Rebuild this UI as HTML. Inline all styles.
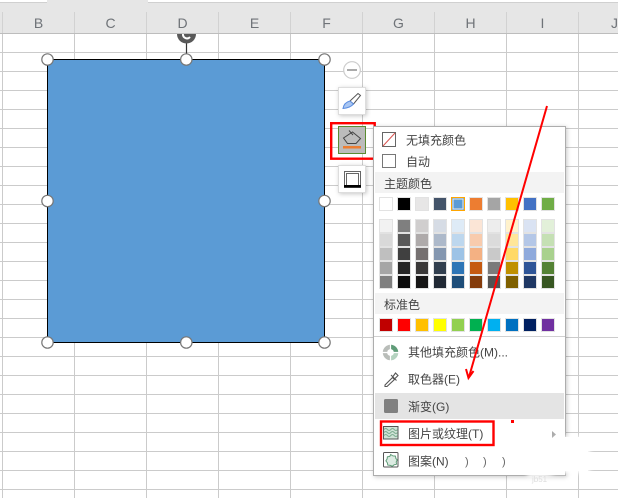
<!DOCTYPE html>
<html><head><meta charset="utf-8"><style>
html,body{margin:0;padding:0;background:#fff;overflow:hidden}
svg{display:block}
text{font-family:"Liberation Sans","Noto Sans CJK SC",sans-serif;font-size:12px;fill:#444}
.h{font-size:14px;fill:#6f7378;text-anchor:middle}
.s rect{width:13px;height:13px;stroke:#e2e2e2;stroke-width:1px}
.g{stroke:#cbcbcb;stroke-width:1;fill:none}
.hd circle{fill:#fff;stroke:#777;stroke-width:1.2}
</style></head><body>
<svg width="618" height="498" viewBox="0 0 618 498" xmlns="http://www.w3.org/2000/svg">
<defs>
<filter id="sh" x="-20%" y="-20%" width="140%" height="140%"><feDropShadow dx="1" dy="1" stdDeviation="2" flood-color="#000" flood-opacity=".22"/></filter>
<filter id="bl" x="-20%" y="-20%" width="140%" height="140%"><feGaussianBlur stdDeviation="2"/></filter>
</defs>
<rect width="618" height="498" fill="#fff"/>
<!-- grid -->
<path class="g" d="M0 52.5H618M0 71.5H618M0 90.5H618M0 109.5H618M0 128.5H618M0 147.5H618M0 166.5H618M0 185.5H618M0 204.5H618M0 223.5H618M0 242.5H618M0 261.5H618M0 280.5H618M0 299.5H618M0 318.5H618M0 337.5H618M0 356.5H618M0 375.5H618M0 394.5H618M0 413.5H618M0 432.5H618M0 451.5H618M0 470.5H618M0 489.5H618"/>
<path class="g" d="M2.5 33V498M74.5 33V498M146.5 33V498M218.5 33V498M290.5 33V498M362.5 33V498M434.5 33V498M506.5 33V498M578.5 33V498"/>
<!-- header -->
<rect y="0" width="618" height="33" fill="#e6e6e6"/>
<rect width="47" height="2" fill="#fff"/><rect x="148" width="470" height="2" fill="#fff"/>
<path d="M0 2.5H47M148 2.5H618" stroke="#d0d0d0"/>
<path d="M0 33.5H618" stroke="#bdbdbd"/>
<path d="M2.5 12V33M74.5 12V33M146.5 12V33M218.5 12V33M290.5 12V33M362.5 12V33M434.5 12V33M506.5 12V33M578.5 12V33" stroke="#d2d2d2"/>
<text class="h" x="38.500" y="28">B</text><text class="h" x="110.500" y="28">C</text><text class="h" x="182.500" y="28">D</text><text class="h" x="254.500" y="28">E</text><text class="h" x="326.500" y="28">F</text><text class="h" x="398.500" y="28">G</text><text class="h" x="470.500" y="28">H</text><text class="h" x="542.500" y="28">I</text><text class="h" x="614.500" y="28">J</text>
<!-- shape -->
<rect x="47.500" y="59.500" width="277" height="283" fill="#5b9bd5" stroke="#000"/>
<path d="M186.500 42V54" stroke="#333" stroke-width="1.2"/>
<path d="M177 34A9.500 9.500 0 0 0 196 34Z" fill="#595959"/>
<path d="M183 34a4 4 0 0 0 7 3" stroke="#fff" stroke-width="2" fill="none"/>
<g class="hd">
<circle cx="47.500" cy="59.500" r="5.700"/><circle cx="186.300" cy="59.500" r="5.700"/><circle cx="324.500" cy="59.500" r="5.700"/>
<circle cx="47.500" cy="201" r="5.700"/><circle cx="324.500" cy="201" r="5.700"/>
<circle cx="47.500" cy="342.500" r="5.700"/><circle cx="186.300" cy="342.500" r="5.700"/><circle cx="324.500" cy="342.500" r="5.700"/>
</g>
<!-- side toolbar -->
<circle cx="352" cy="70" r="8.300" fill="#fff" stroke="#ccc" stroke-width="1.200"/>
<path d="M347 70H357" stroke="#aaa" stroke-width="2"/>
<rect x="338.500" y="87.500" width="27" height="27" fill="#fff" stroke="#ddd" filter="url(#sh)"/>
<path d="M350 101L358 93.500 360.500 95.500 353.500 104Z" fill="#fff" stroke="#555"/>
<path d="M343 108.500Q344 102.500 350 101L353.500 104Q350 108 343 108.500Z" fill="#a9c6f2" stroke="#5b8de0"/>
<rect x="338.500" y="126.500" width="27" height="27" fill="#bcbcbc" stroke="#5a8c32"/>
<path d="M343.500 138L352.500 132 360.500 138.500 356 143.500H347.500L343.500 138ZM349 130.500L353 135" fill="none" stroke="#444" stroke-width="1"/>
<rect x="343" y="146" width="18" height="2.500" fill="#ed7d31"/>
<rect x="338.500" y="165.500" width="27" height="27" fill="#fff" stroke="#ddd" filter="url(#sh)"/>
<path d="M344.500 185V171.500H360.500V185M346.500 185V173.500H358.500V185" fill="none" stroke="#666"/>
<rect x="344" y="185" width="17" height="2.800" fill="#000"/>
<rect x="331.200" y="123.200" width="43.500" height="35.500" fill="none" stroke="#f00" stroke-width="2.400"/>
<!-- menu -->
<rect x="373.500" y="126.500" width="192" height="349" fill="#fff" stroke="#adadad" filter="url(#sh)"/>
<rect x="382.500" y="132.500" width="13" height="14" fill="#fff" stroke="#666"/>
<path d="M383 146L395 133" stroke="#d9534f"/>
<text x="406" y="144.500">无填充颜色</text>
<rect x="382.500" y="154.500" width="13" height="13" fill="#fff" stroke="#777"/>
<text x="406" y="166">自动</text>
<rect x="375" y="172" width="189" height="21" fill="#f3f3f3"/>
<text x="384" y="188">主题颜色</text>
<g class="s">
<rect x="379.500" y="197.500" fill="#ffffff"/><rect x="397.500" y="197.500" fill="#000000"/><rect x="415.500" y="197.500" fill="#e7e6e6"/><rect x="433.500" y="197.500" fill="#44546a"/><rect x="469.500" y="197.500" fill="#ed7d31"/><rect x="487.500" y="197.500" fill="#a5a5a5"/><rect x="505.500" y="197.500" fill="#ffc000"/><rect x="523.500" y="197.500" fill="#4472c4"/><rect x="541.500" y="197.500" fill="#70ad47"/>
<rect x="379.500" y="219.500" fill="#f2f2f2"/><rect x="379.500" y="233.500" fill="#d9d9d9"/><rect x="379.500" y="247.500" fill="#bfbfbf"/><rect x="379.500" y="261.500" fill="#a6a6a6"/><rect x="379.500" y="275.500" fill="#808080"/>
<rect x="397.500" y="219.500" fill="#7f7f7f"/><rect x="397.500" y="233.500" fill="#595959"/><rect x="397.500" y="247.500" fill="#404040"/><rect x="397.500" y="261.500" fill="#262626"/><rect x="397.500" y="275.500" fill="#0d0d0d"/>
<rect x="415.500" y="219.500" fill="#d0cece"/><rect x="415.500" y="233.500" fill="#aeaaaa"/><rect x="415.500" y="247.500" fill="#757070"/><rect x="415.500" y="261.500" fill="#3a3838"/><rect x="415.500" y="275.500" fill="#171616"/>
<rect x="433.500" y="219.500" fill="#d6dce5"/><rect x="433.500" y="233.500" fill="#adb9ca"/><rect x="433.500" y="247.500" fill="#8497b0"/><rect x="433.500" y="261.500" fill="#323f4f"/><rect x="433.500" y="275.500" fill="#222a35"/>
<rect x="451.500" y="219.500" fill="#deebf7"/><rect x="451.500" y="233.500" fill="#bdd7ee"/><rect x="451.500" y="247.500" fill="#9dc3e6"/><rect x="451.500" y="261.500" fill="#2e75b6"/><rect x="451.500" y="275.500" fill="#1f4e79"/>
<rect x="469.500" y="219.500" fill="#fbe5d6"/><rect x="469.500" y="233.500" fill="#f8cbad"/><rect x="469.500" y="247.500" fill="#f4b183"/><rect x="469.500" y="261.500" fill="#c55a11"/><rect x="469.500" y="275.500" fill="#843c0c"/>
<rect x="487.500" y="219.500" fill="#ededed"/><rect x="487.500" y="233.500" fill="#dbdbdb"/><rect x="487.500" y="247.500" fill="#c9c9c9"/><rect x="487.500" y="261.500" fill="#7b7b7b"/><rect x="487.500" y="275.500" fill="#525252"/>
<rect x="505.500" y="219.500" fill="#fff2cc"/><rect x="505.500" y="233.500" fill="#ffe699"/><rect x="505.500" y="247.500" fill="#ffd966"/><rect x="505.500" y="261.500" fill="#bf9000"/><rect x="505.500" y="275.500" fill="#7f6000"/>
<rect x="523.500" y="219.500" fill="#dae3f3"/><rect x="523.500" y="233.500" fill="#b4c7e7"/><rect x="523.500" y="247.500" fill="#8faadc"/><rect x="523.500" y="261.500" fill="#2f5597"/><rect x="523.500" y="275.500" fill="#203864"/>
<rect x="541.500" y="219.500" fill="#e2f0d9"/><rect x="541.500" y="233.500" fill="#c5e0b4"/><rect x="541.500" y="247.500" fill="#a9d18e"/><rect x="541.500" y="261.500" fill="#548235"/><rect x="541.500" y="275.500" fill="#385723"/>
<rect x="379.500" y="318.500" fill="#c00000"/><rect x="397.500" y="318.500" fill="#ff0000"/><rect x="415.500" y="318.500" fill="#ffc000"/><rect x="433.500" y="318.500" fill="#ffff00"/><rect x="451.500" y="318.500" fill="#92d050"/><rect x="469.500" y="318.500" fill="#00b050"/><rect x="487.500" y="318.500" fill="#00b0f0"/><rect x="505.500" y="318.500" fill="#0070c0"/><rect x="523.500" y="318.500" fill="#002060"/><rect x="541.500" y="318.500" fill="#7030a0"/>
</g>
<rect x="451.500" y="197.500" width="13" height="13" fill="#5b9bd5" stroke="#ffa500" stroke-width="1"/>
<rect x="453" y="199" width="10" height="10" fill="#5b9bd5" stroke="#e8e8e8"/>
<rect x="375" y="293" width="189" height="21" fill="#f3f3f3"/>
<text x="384" y="309">标准色</text>
<path d="M374 336.500H565" stroke="#d0d0d0"/>
<!-- other colors -->
<circle cx="390.500" cy="352.500" r="7.700" fill="#b9bdb9"/>
<path d="M390.500 352.500V344.800A7.700 7.700 0 0 1 398.200 352.500Z" fill="#5f9c78"/>
<path d="M390.500 352.500H398.200A7.700 7.700 0 0 1 390.500 360.200Z" fill="#b5d3c0"/>
<path d="M382 352.500H399M390.500 344V361" stroke="#fff" stroke-width="1.200"/>
<circle cx="390.500" cy="352.500" r="3.400" fill="#fff"/>
<text x="408" y="356.500">其他填充颜色(M)...</text>
<!-- eyedropper -->
<path d="M385 385L392.500 377.500 394.500 379.500 387 386.500 385 386.500ZM391 375L396.500 380.500M393 376.500L395.500 373 398 375.500 395 378.500" fill="#fff" stroke="#555" stroke-width="1.100"/>
<text x="408" y="383.500">取色器(E)</text>
<rect x="375" y="393" width="189" height="26" fill="#e4e4e4"/>
<rect x="384" y="399" width="14" height="14" rx="1.500" fill="#808080"/>
<text x="408" y="411">渐变(G)</text>
<!-- picture -->
<rect x="383.500" y="426.500" width="14.500" height="12.500" fill="#cfe3d6" stroke="#555"/>
<path d="M384 429.500q1.700-2 3.400 0t3.400 0 3.400 0 3.400 0M384 432.500q1.700-2 3.400 0t3.400 0 3.400 0 3.400 0M384 435.500q1.700-2 3.400 0t3.400 0 3.400 0 3.400 0" fill="none" stroke="#7fae92"/>
<text x="408" y="438">图片或纹理(T)</text>
<rect x="381" y="421.500" width="112.500" height="23.500" fill="none" stroke="#f00" stroke-width="2.400"/>
<path d="M552 431l4 3.500-4 3.500z" fill="#aaa"/>
<!-- pattern -->
<rect x="383.500" y="452.500" width="14.500" height="14.500" rx="1" fill="#fff" stroke="#555"/>
<path d="M390.700 454.500l2.200 1.400 2.500.2.500 2.500 1.300 1.200-1 2.300.400 2-2.500.700-1.700 1.500-2-.900-2.600-.300-.500-2.400-1.400-1.800 1.200-2 .300-2.100 2.400-.400z" fill="#dcebe2" stroke="#5f9c78"/>
<text x="408" y="465.500">图案(N)</text>
<!-- watermark blotch -->
<g filter="url(#bl)">
<path d="M555 437H590V473H556Q548 479 527 477L527 472H540Q552 466 553 450Z" fill="#fff"/>
</g>
<rect x="555" y="437" width="33" height="34" fill="#fff"/>
<text x="465" y="465" style="font-size:11px;fill:#666">)</text><text x="483" y="465" style="font-size:11px;fill:#666">)</text><text x="502" y="465" style="font-size:11px;fill:#666">)</text>
<text x="532" y="482" style="font-size:8px;fill:#ddd">jb51</text>
<!-- red arrow -->
<path d="M547 106L469 377M466 369L468.500 378L473.500 371" fill="none" stroke="#f00" stroke-width="2"/>
<rect x="511" y="420" width="3" height="3" fill="#f00"/>
</svg>
</body></html>
